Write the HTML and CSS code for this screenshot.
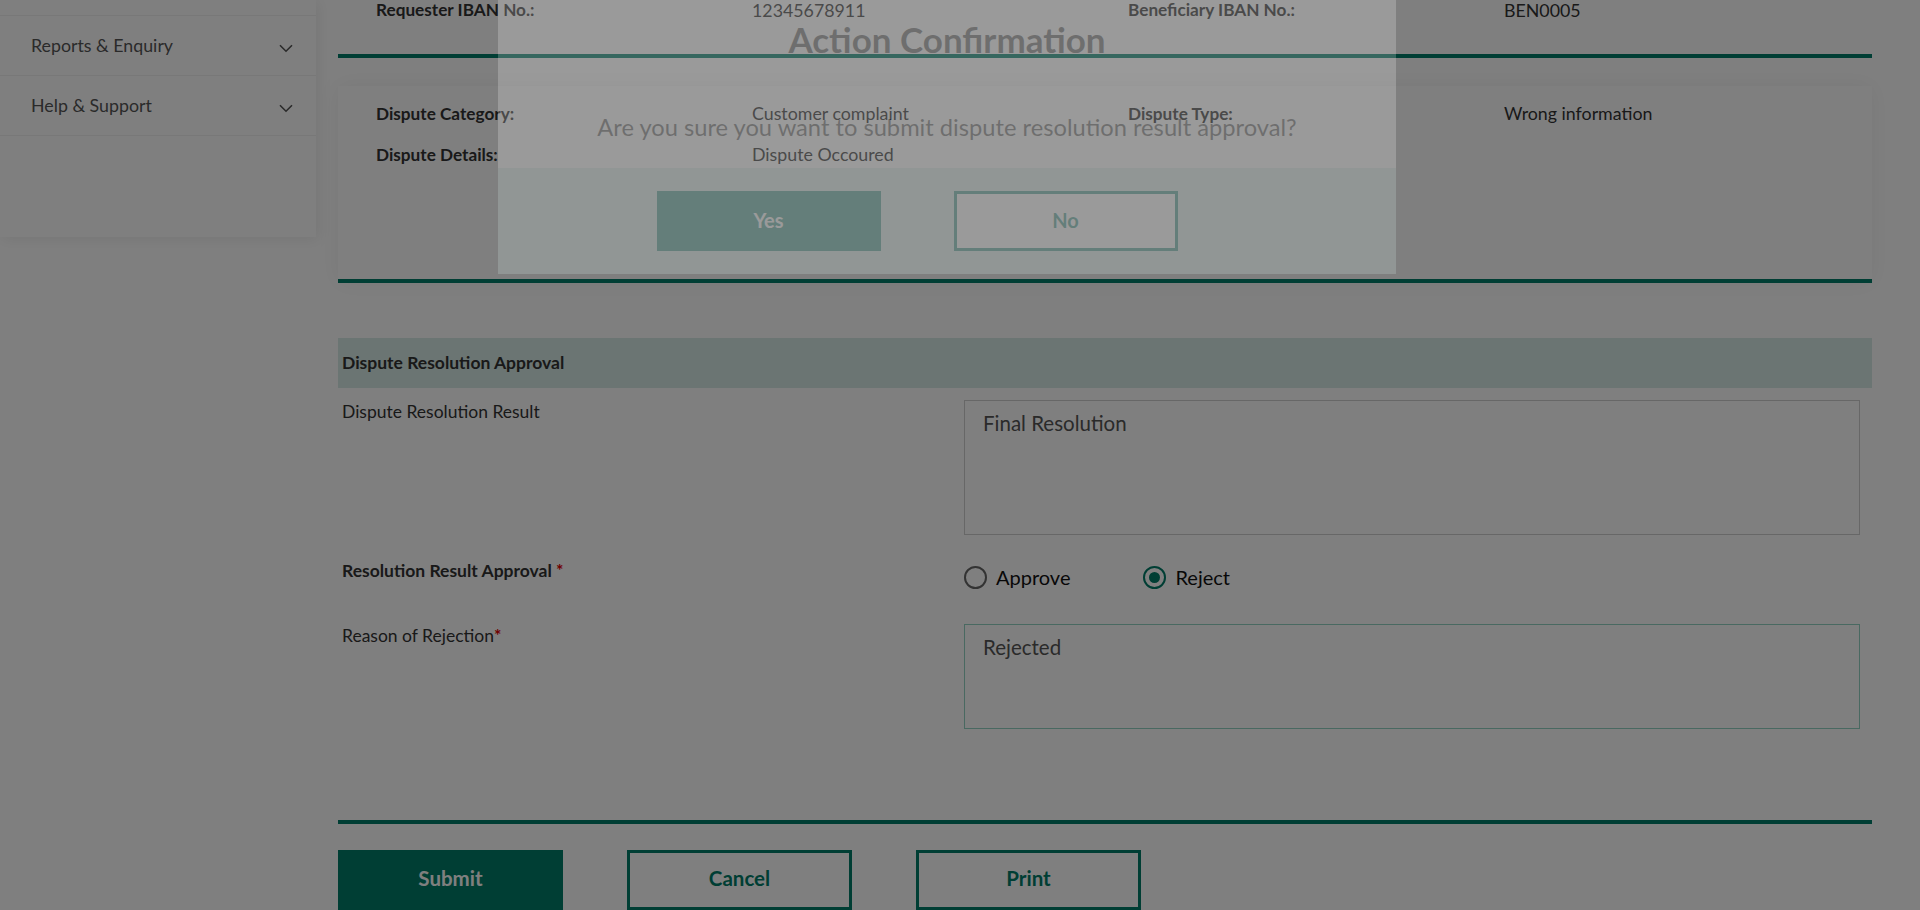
FILE: index.html
```html
<!DOCTYPE html>
<html lang="en">
<head>
<meta charset="utf-8">
<title>Dispute Resolution Approval</title>
<link rel="stylesheet" href="styles.css">
</head>
<body>
<div class="layout">
  <aside class="sidebar">
    <div class="side-panel">
      <div class="side-top"></div>
      <div class="side-item">
        <span>Reports &amp; Enquiry</span>
        <svg class="chev" width="14" height="9" viewBox="0 0 14 9"><path d="M1 1.2 L7 7.2 L13 1.2" fill="none" stroke="#555" stroke-width="1.6"/></svg>
      </div>
      <div class="side-item">
        <span>Help &amp; Support</span>
        <svg class="chev" width="14" height="9" viewBox="0 0 14 9"><path d="M1 1.2 L7 7.2 L13 1.2" fill="none" stroke="#555" stroke-width="1.6"/></svg>
      </div>
    </div>
  </aside>

  <main class="main">
    <section class="card card-top">
      <div class="data-grid">
        <div class="lbl">Requester IBAN No.:</div>
        <div class="val">12345678911</div>
        <div class="lbl">Beneficiary IBAN No.:</div>
        <div class="val">BEN0005</div>
      </div>
    </section>

    <section class="card card-dispute">
      <div class="data-grid">
        <div class="lbl">Dispute Category:</div>
        <div class="val">Customer complaint</div>
        <div class="lbl">Dispute Type:</div>
        <div class="val">Wrong information</div>
        <div class="lbl">Dispute Details:</div>
        <div class="val">Dispute Occoured</div>
      </div>
    </section>

    <section class="approval">
      <div class="band">Dispute Resolution Approval</div>

      <div class="form-row row-result">
        <div class="f-label">Dispute Resolution Result</div>
        <textarea class="ta ta-result" readonly>Final Resolution</textarea>
      </div>

      <div class="form-row row-radio">
        <div class="f-label strong">Resolution Result Approval <span class="req">*</span></div>
        <div class="radios">
          <label class="radio"><input type="radio" name="res"><span>Approve</span></label>
          <label class="radio"><input type="radio" name="res" checked><span>Reject</span></label>
        </div>
      </div>

      <div class="form-row row-reason">
        <div class="f-label">Reason of Rejection<span class="req">*</span></div>
        <textarea class="ta ta-reason" readonly>Rejected</textarea>
      </div>

      <div class="actions">
        <button class="btn btn-fill">Submit</button>
        <button class="btn btn-line">Cancel</button>
        <button class="btn btn-line">Print</button>
      </div>
    </section>
  </main>
</div>

<div class="overlay"></div>

<div class="modal">
  <div class="modal-body">
    <h2 class="modal-title">Action Confirmation</h2>
    <p class="modal-text">Are you sure you want to submit dispute resolution result approval?</p>
  </div>
  <div class="modal-foot">
    <button class="mbtn mbtn-yes">Yes</button>
    <button class="mbtn mbtn-no">No</button>
  </div>
</div>
</body>
</html>
```

FILE: styles.css
```css
* { box-sizing: border-box; }

html, body {
  margin: 0;
  padding: 0;
  height: 100%;
  overflow: hidden;
}

body {
  font-family: Lato, "Open Sans", sans-serif;
  color: #333;
  background: #fff;
}

.layout {
  display: flex;
  align-items: flex-start;
}

/* Sidebar */
.sidebar {
  width: 316px;
  flex: none;
}

.side-panel {
  background: #fff;
  height: 237px;
  box-shadow: 2px 2px 14px rgba(0, 0, 0, 0.08);
}

.side-top {
  height: 16px;
  border-bottom: 1px solid #f0f0f0;
}

.side-item {
  height: 60px;
  display: flex;
  align-items: center;
  justify-content: space-between;
  padding: 0 23px 0 31px;
  border-bottom: 1px solid #f0f0f0;
  font-size: 17.8px;
  color: #555;
}

.side-item span {
  margin-top: -2px;
}

.chev {
  margin-top: 5px;
}

/* Main */
.main {
  flex: 1;
  min-width: 0;
  margin-left: 22px;
  margin-right: 48px;
}

.card {
  background: #fff;
  border-bottom: 4px solid #007d68;
  padding: 0 0 0 38px;
}

.card-top {
  height: 58px;
}

.card-dispute {
  margin-top: 28px;
  height: 197px;
  padding-top: 16px;
  box-shadow: 0 0 22px rgba(0, 0, 0, 0.06);
}

.data-grid {
  display: grid;
  grid-template-columns: 376px 376px 376px 1fr;
  row-gap: 17px;
}

.lbl {
  font-weight: 700;
  font-size: 17.2px;
  line-height: 24px;
  color: #333;
}

.val {
  font-size: 17.8px;
  line-height: 22px;
  color: #333;
}

.card-top .lbl, .card-top .val {
  line-height: 20px;
}

/* Approval */
.approval {
  margin-top: 55px;
}

.band {
  height: 50px;
  background: #d6eae6;
  font-weight: 700;
  font-size: 17.5px;
  line-height: 50px;
  padding-left: 4px;
  color: #333;
}

.form-row {
  display: grid;
  grid-template-columns: 626px 896px;
}

.row-result { margin-top: 12px; }
.row-radio { margin-top: 24px; }
.row-reason { margin-top: 35px; }

.f-label {
  font-size: 17.5px;
  line-height: 24px;
  padding-left: 4px;
  color: #333;
}

.f-label.strong {
  font-weight: 700;
}

.req {
  color: #e00000;
  font-weight: 700;
}

.ta {
  display: block;
  width: 896px;
  resize: none;
  font-family: Lato, "Open Sans", sans-serif;
  font-size: 20.5px;
  line-height: 24px;
  color: #555;
  padding: 10px 18px;
  background: #fff;
  outline: none;
  margin: 0;
}

.ta-result {
  height: 135px;
  border: 1px solid #cfcfcf;
}

.ta-reason {
  height: 105px;
  border: 1px solid #93d3c3;
}

.radios {
  display: flex;
  gap: 73px;
  margin-top: 6px;
}

.radio {
  display: flex;
  align-items: center;
  gap: 9px;
  font-size: 20px;
  line-height: 24px;
  color: #111;
}

.radio input {
  appearance: none;
  -webkit-appearance: none;
  margin: 0;
  width: 23px;
  height: 23px;
  border: 2px solid #666;
  border-radius: 50%;
  background: #fff;
  display: grid;
  place-items: center;
}

.radio input:checked {
  border-color: #007d68;
}

.radio input:checked::after {
  content: "";
  width: 11px;
  height: 11px;
  border-radius: 50%;
  background: #007d68;
}

.actions {
  margin-top: 91px;
  border-top: 4px solid #007d68;
  padding-top: 26px;
  display: flex;
  gap: 64px;
}

.btn {
  width: 225px;
  height: 60px;
  padding: 0 0 4px;
  font-family: Lato, "Open Sans", sans-serif;
  font-weight: 700;
  font-size: 20.5px;
  cursor: pointer;
}

.btn-fill {
  background: #007d68;
  color: #fff;
  border: 3px solid #007d68;
}

.btn-line {
  background: #fff;
  color: #007d68;
  border: 3px solid #007d68;
}

/* Overlay + modal */
.overlay {
  position: fixed;
  inset: 0;
  background: rgba(0, 0, 0, 0.5);
}

.modal {
  position: fixed;
  top: 0;
  left: 498px;
  width: 898px;
  opacity: 0.21;
  background: #fff;
}

.modal-body {
  height: 168px;
  padding-top: 18px;
  text-align: center;
}

.modal-title {
  margin: 0;
  font-size: 35px;
  line-height: 42px;
  font-weight: 700;
  color: #333;
}

.modal-text {
  margin: 52px 0 0;
  font-size: 23.7px;
  line-height: 30px;
  color: #333;
}

.modal-foot {
  height: 106px;
  background: #d6eae6;
  display: flex;
  justify-content: center;
  align-items: center;
  gap: 73px;
  padding-right: 60px;
}

.mbtn {
  width: 224px;
  height: 60px;
  padding: 0 0 2px;
  font-family: Lato, "Open Sans", sans-serif;
  font-weight: 700;
  font-size: 20px;
}

.mbtn-yes {
  background: #007d68;
  color: #fff;
  border: 3px solid #007d68;
}

.mbtn-no {
  background: #fff;
  color: #007d68;
  border: 3px solid #007d68;
}
```
